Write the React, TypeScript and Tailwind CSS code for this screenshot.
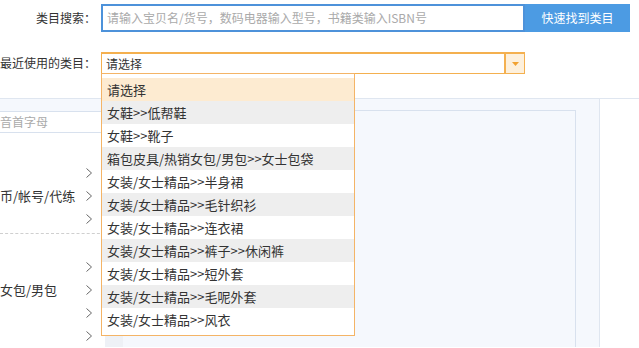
import React from 'react';

const recent = [
  '请选择',
  '女鞋>>低帮鞋',
  '女鞋>>靴子',
  '箱包皮具/热销女包/男包>>女士包袋',
  '女装/女士精品>>半身裙',
  '女装/女士精品>>毛针织衫',
  '女装/女士精品>>连衣裙',
  '女装/女士精品>>裤子>>休闲裤',
  '女装/女士精品>>短外套',
  '女装/女士精品>>毛呢外套',
  '女装/女士精品>>风衣',
];

const Chevron = () => (
  <svg width="6" height="10" viewBox="0 0 6 10" fill="none">
    <polyline points="0.5,0.5 5.5,5 0.5,9.5" stroke="#666" strokeWidth="1" />
  </svg>
);

const CatRow = ({ label }: { label?: string }) => (
  <div className="flex h-[23px] items-center justify-between pr-[13px]">
    <span className="whitespace-nowrap text-[13px] text-[#333]">{label}</span>
    <Chevron />
  </div>
);

const App = () => {
  return (
    <div className="relative h-[348px] w-[639px] overflow-hidden bg-white font-['Noto_Sans_CJK_SC','Microsoft_YaHei',sans-serif] text-[12px] leading-none text-[#333]">
      {/* search row */}
      <div className="flex items-center pt-[4px]">
        <div className="w-[97px] pr-[1px] text-right">类目搜索：</div>
        <div className="ml-[4px] flex h-[28px] w-[424px] items-center border-2 border-[#4d92da] pl-[4px] text-[#aaa]">
          请输入宝贝名/货号，数码电器输入型号，书籍类输入ISBN号
        </div>
        <button className="flex h-[28px] w-[105px] items-center justify-center bg-[#4c9be3] text-white">
          快速找到类目
        </button>
      </div>

      {/* recent categories */}
      <div className="mt-[20px] flex items-center">
        <div className="w-[97px] whitespace-nowrap pr-[4px] text-right">最近使用的类目：</div>
        <div className="relative ml-[4px] flex h-[22px] w-[424px] items-center border border-t-2 border-[#f4b04f] bg-white">
          <span className="pl-[4px]">请选择</span>
          <div className="ml-auto flex h-full w-[20px] items-center justify-center border-l-2 border-[#f4b04f] bg-[#fdf0dc]">
            <svg width="7" height="4" viewBox="0 0 7 4">
              <polygon points="0,0 7,0 3.5,4" fill="#f1a232" />
            </svg>
          </div>

          <div className="absolute left-[-1px] top-full z-10 w-[254px] border border-[#f4b466] bg-white pt-[4px] pb-[4px]">
            {recent.map((item, i) => (
              <div
                key={item}
                className={`h-[23px] whitespace-nowrap pl-[5px] text-[13px] leading-[23px] text-[#333] ${
                  i === 0 ? 'bg-[#fdebd1]' : i % 2 === 1 ? 'bg-[#eeeeee]' : 'bg-white'
                }`}
              >
                {item}
              </div>
            ))}
          </div>
        </div>
      </div>

      {/* category browser */}
      <div className="mt-[24px] flex h-[249px] border-t border-[#dfe6f0]">
        <div className="flex w-[600px] border-r border-[#dfe6f0] bg-[#f5f8fd]">
          <div className="mt-[12px] flex w-[123px]">
            <div className="w-[105px] border-t border-[#d8e1ee] bg-white">
              <div className="flex h-[21px] items-center border-b border-[#d8e1ee] text-[12px] text-[#aaa]">
                音首字母
              </div>
              <div className="border-b border-dashed border-[#cfcfcf] pt-[28px] pb-[3px]">
                <CatRow />
                <CatRow label="币/帐号/代练" />
                <CatRow />
              </div>
              <div className="pt-[21px]">
                <CatRow />
                <CatRow label="女包/男包" />
                <CatRow />
                <CatRow />
              </div>
            </div>
            <div className="w-[18px] bg-[#eef1f6]" />
          </div>
          <div className="mt-[11px] ml-[1px] w-[452px] border-t border-r border-[#d8e1ee] bg-[#f5f8fd]" />
        </div>
        <div className="flex-1 bg-white" />
      </div>
    </div>
  );
};

export default App;
